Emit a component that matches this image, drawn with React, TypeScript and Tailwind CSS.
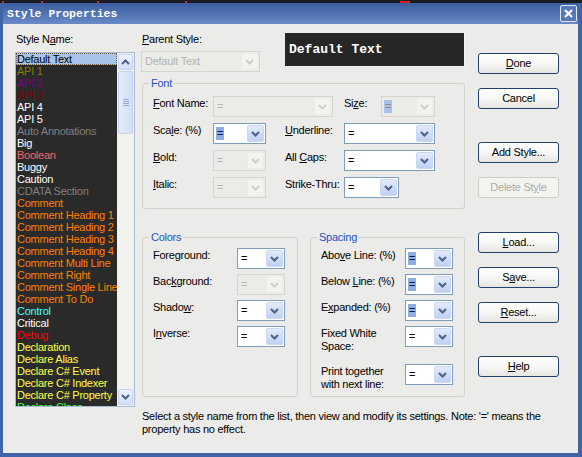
import React from 'react';

const listItems: { name: string; cls: string }[] = [
  { name: 'Default Text', cls: 'text-black' },
  { name: 'API 1', cls: 'text-[#808000]' },
  { name: 'API 2', cls: 'text-[#800080]' },
  { name: 'API 3', cls: 'text-[#800000]' },
  { name: 'API 4', cls: 'text-white' },
  { name: 'API 5', cls: 'text-white' },
  { name: 'Auto Annotations', cls: 'text-[#808080]' },
  { name: 'Big', cls: 'text-white' },
  { name: 'Boolean', cls: 'text-[#ff6464]' },
  { name: 'Buggy', cls: 'text-white' },
  { name: 'Caution', cls: 'text-white' },
  { name: 'CDATA Section', cls: 'text-[#808080]' },
  { name: 'Comment', cls: 'text-[#ff8000]' },
  { name: 'Comment Heading 1', cls: 'text-[#ff8000]' },
  { name: 'Comment Heading 2', cls: 'text-[#ff8000]' },
  { name: 'Comment Heading 3', cls: 'text-[#ff8000]' },
  { name: 'Comment Heading 4', cls: 'text-[#ff8000]' },
  { name: 'Comment Multi Line', cls: 'text-[#ff8000]' },
  { name: 'Comment Right', cls: 'text-[#ff8000]' },
  { name: 'Comment Single Line', cls: 'text-[#ff8000]' },
  { name: 'Comment To Do', cls: 'text-[#ff8000]' },
  { name: 'Control', cls: 'text-[#40ffff]' },
  { name: 'Critical', cls: 'text-white' },
  { name: 'Debug', cls: 'text-[#ff0000]' },
  { name: 'Declaration', cls: 'text-[#ffff40]' },
  { name: 'Declare Alias', cls: 'text-[#ffff40]' },
  { name: 'Declare C# Event', cls: 'text-[#ffff40]' },
  { name: 'Declare C# Indexer', cls: 'text-[#ffff40]' },
  { name: 'Declare C# Property', cls: 'text-[#ffff40]' },
  { name: 'Declare Class', cls: 'text-[#40ff40]' },
];

function Chevron({ disabled, up }: { disabled?: boolean; up?: boolean }) {
  return (
    <svg width="9" height="6" viewBox="0 0 9 6">
      <path
        d={up ? 'M1 5 L4.5 1.5 L8 5' : 'M1 1 L4.5 4.5 L8 1'}
        fill="none"
        stroke={disabled ? '#cfcfca' : '#4d6185'}
        strokeWidth="2"
      />
    </svg>
  );
}

function Combo({
  w,
  text = '=',
  disabled,
  hl,
  className = '',
}: {
  w: string;
  text?: string;
  disabled?: boolean;
  hl?: boolean;
  className?: string;
}) {
  return (
    <div
      className={`${w} ${className} h-[21px] shrink-0 flex border ${
        disabled ? 'border-[#d6d5cf] bg-[#ebebe8]' : 'border-[#7f9db9] bg-white'
      }`}
    >
      <div className="flex-1 flex items-center pl-[2px] overflow-hidden whitespace-nowrap">
        <span
          className={`px-[1px] leading-[13px] ${
            hl
              ? disabled
                ? 'bg-[#a9c0e8] text-[#8a8a86]'
                : 'bg-[#8eaee2] text-[#10204a]'
              : disabled
              ? 'text-[#b4b3ad]'
              : 'text-black'
          }`}
        >
          {text}
        </span>
      </div>
      <div
        className={`w-[17px] m-[1px] rounded-[2px] flex items-center justify-center border ${
          disabled
            ? 'bg-[#f3f3f0] border-[#ecece8]'
            : 'bg-linear-to-b from-[#e3ebfb] to-[#bfd0f1] border-[#cad8f3]'
        }`}
      >
        <Chevron disabled={disabled} />
      </div>
    </div>
  );
}

function Btn({
  children,
  mt,
  disabled,
}: {
  children: React.ReactNode;
  mt: string;
  disabled?: boolean;
}) {
  return (
    <div
      className={`${mt} w-[81px] h-[21px] flex items-center justify-center rounded-[3px] border ${
        disabled
          ? 'border-[#cfcec6] text-[#acaba4] bg-[#f3f3f0]'
          : 'border-[#22406f] text-black bg-linear-to-b from-white via-[#f7f7f5] to-[#e6e5e0]'
      }`}
    >
      {children}
    </div>
  );
}

function Group({
  title,
  className,
  children,
}: {
  title: string;
  className: string;
  children: React.ReactNode;
}) {
  return (
    <fieldset className={`border border-[#d3d2c8] rounded-[3px] ${className}`}>
      <legend className="ml-[6px] px-[2px] leading-[13px] text-[#2453c4]">{title}</legend>
      {children}
    </fieldset>
  );
}

export default function App() {
  return (
    <div className="w-[582px] h-[457px] flex flex-col bg-[#181b22] overflow-hidden text-[11px] font-['Liberation_Sans',Arial,sans-serif]">
      {/* strip of whatever sits behind the window */}
      <div className="h-[3px] flex items-end">
        <span className="ml-[2px] w-[2px] h-[2px] bg-[#e02020]" />
        <span className="ml-[37px] w-[2px] h-[2px] bg-[#e02020]" />
        <span className="ml-[54px] w-[2px] h-[2px] bg-[#e02020]" />
        <span className="ml-[86px] w-[2px] h-[2px] bg-[#e02020]" />
        <span className="ml-[213px] w-[10px] h-[2px] bg-[#e02020]" />
      </div>

      <div className="flex-1 flex flex-col border-l-[3px] border-r-[4px] border-b-[4px] border-[#4163a8]">
        {/* title bar */}
        <div className="h-[21px] flex items-center justify-between pl-[4px] pr-[1px] bg-linear-to-b from-[#3b5c9f] via-[#5172b2] to-[#6a8bc8]">
          <span className="text-white font-bold text-[11.5px] font-['Liberation_Mono',monospace]">
            Style Properties
          </span>
          <div className="w-[17px] h-[17px] flex items-center justify-center border border-[#dfe7f6] rounded-[2px] bg-[#5678bb]">
            <svg width="9" height="9" viewBox="0 0 9 9">
              <path d="M1 1 L8 8 M8 1 L1 8" stroke="white" strokeWidth="2.2" />
            </svg>
          </div>
        </div>

        {/* body */}
        <div className="flex-1 flex bg-[#ebebea] pt-[9px] pl-[12px] text-black tracking-[-0.25px]">
          {/* style list */}
          <div className="w-[120px] flex flex-col">
            <div className="pl-[1px] leading-[13px]">
              Style N<u>a</u>me:
            </div>
            <div className="mt-[6px] h-[355px] flex border border-[#a9bad3] bg-[#2a2a2a] overflow-hidden">
              <div className="flex-1 flex flex-col overflow-hidden">
                {listItems.map((it, i) => (
                  <div
                    key={it.name}
                    className={`h-[12px] shrink-0 leading-[12px] pl-[1px] whitespace-nowrap ${it.cls} ${
                      i === 0
                        ? 'bg-[#a8c4e8] outline-1 outline-dotted outline-[#6b5a48] -outline-offset-1'
                        : ''
                    }`}
                  >
                    {it.name}
                  </div>
                ))}
              </div>
              <div className="w-[17px] shrink-0 flex flex-col bg-[#f2f2ee] py-[1px]">
                <div className="h-[16px] mx-[1px] flex items-center justify-center rounded-[2px] border border-[#c4d2ee] bg-linear-to-b from-[#eef3fd] to-[#d2def5]">
                  <Chevron up />
                </div>
                <div className="h-[63px] mt-[1px] mx-[1px] flex flex-col items-center justify-center gap-[1px] rounded-[2px] border border-[#c4d2ee] bg-linear-to-r from-[#e6edfb] to-[#d3dff5]">
                  <div className="w-[6px] h-px bg-[#90a7d4]" />
                  <div className="w-[6px] h-px bg-[#90a7d4]" />
                  <div className="w-[6px] h-px bg-[#90a7d4]" />
                  <div className="w-[6px] h-px bg-[#90a7d4]" />
                </div>
                <div className="flex-1" />
                <div className="h-[16px] mx-[1px] flex items-center justify-center rounded-[2px] border border-[#c4d2ee] bg-linear-to-b from-[#eef3fd] to-[#d2def5]">
                  <Chevron />
                </div>
              </div>
            </div>
          </div>

          {/* middle + right */}
          <div className="ml-[6px] flex flex-col">
            <div className="flex items-start">
              {/* middle column */}
              <div className="w-[324px] flex flex-col">
                <div className="flex items-start">
                  <div className="w-[119px] flex flex-col">
                    <div className="pl-[1px] leading-[13px]">
                      <u>P</u>arent Style:
                    </div>
                    <Combo w="w-[119px]" className="mt-[5px]" text="Default Text" disabled />
                  </div>
                  <div className="ml-[25px] w-[180px] h-[34px] flex items-center pl-[4px] bg-[#262626] border-b border-r border-[#f4f4f4]">
                    <span className="text-white font-bold text-[13px] tracking-normal font-['Liberation_Mono',monospace]">
                      Default Text
                    </span>
                  </div>
                </div>

                <Group title="Font" className="mt-[5px] ml-[1px] w-[323px] h-[132px]">
                  <div className="pl-[10px] pt-[6px] flex flex-col gap-[6px]">
                    <div className="flex items-start">
                      <div className="w-[60px] leading-[13px] mt-[1px]">
                        <u>F</u>ont Name:
                      </div>
                      <Combo w="w-[120px]" disabled />
                      <div className="ml-[11px] w-[37px] leading-[13px] mt-[1px]">
                        Si<u>z</u>e:
                      </div>
                      <Combo w="w-[54px]" disabled hl />
                    </div>
                    <div className="flex items-start">
                      <div className="w-[60px] leading-[13px] mt-[1px]">
                        Sca<u>l</u>e: (%)
                      </div>
                      <Combo w="w-[53px]" hl />
                      <div className="ml-[19px] w-[59px] leading-[13px] mt-[1px]">
                        <u>U</u>nderline:
                      </div>
                      <Combo w="w-[91px]" />
                    </div>
                    <div className="flex items-start">
                      <div className="w-[60px] leading-[13px] mt-[1px]">
                        <u>B</u>old:
                      </div>
                      <Combo w="w-[53px]" disabled />
                      <div className="ml-[19px] w-[59px] leading-[13px] mt-[1px]">
                        All <u>C</u>aps:
                      </div>
                      <Combo w="w-[91px]" />
                    </div>
                    <div className="flex items-start">
                      <div className="w-[60px] leading-[13px] mt-[1px]">
                        <u>I</u>talic:
                      </div>
                      <Combo w="w-[53px]" disabled />
                      <div className="ml-[19px] w-[59px] leading-[13px] mt-[1px]">
                        Strike-Thru:
                      </div>
                      <Combo w="w-[55px]" />
                    </div>
                  </div>
                </Group>

                <div className="mt-[22px] ml-[1px] flex">
                  <Group title="Colors" className="w-[156px] h-[166px]">
                    <div className="pl-[10px] pt-[4px] flex flex-col gap-[5px]">
                      <div className="flex items-start">
                        <div className="w-[84px] leading-[13px] mt-[1px]">
                          Fore<u>g</u>round:
                        </div>
                        <Combo w="w-[48px]" />
                      </div>
                      <div className="flex items-start">
                        <div className="w-[84px] leading-[13px] mt-[1px]">
                          Bac<u>k</u>ground:
                        </div>
                        <Combo w="w-[48px]" disabled />
                      </div>
                      <div className="flex items-start">
                        <div className="w-[84px] leading-[13px] mt-[1px]">
                          Shado<u>w</u>:
                        </div>
                        <Combo w="w-[48px]" />
                      </div>
                      <div className="flex items-start">
                        <div className="w-[84px] leading-[13px] mt-[1px]">
                          I<u>n</u>verse:
                        </div>
                        <Combo w="w-[48px]" />
                      </div>
                    </div>
                  </Group>
                  <Group title="Spacing" className="ml-[12px] w-[155px] h-[166px]">
                    <div className="pl-[10px] pt-[4px] flex flex-col gap-[5px]">
                      <div className="flex items-start">
                        <div className="w-[84px] leading-[13px] mt-[1px]">
                          Abo<u>v</u>e Line: (%)
                        </div>
                        <Combo w="w-[48px]" hl />
                      </div>
                      <div className="flex items-start">
                        <div className="w-[84px] leading-[13px] mt-[1px]">
                          Below <u>L</u>ine: (%)
                        </div>
                        <Combo w="w-[48px]" hl />
                      </div>
                      <div className="flex items-start">
                        <div className="w-[84px] leading-[13px] mt-[1px]">
                          E<u>x</u>panded: (%)
                        </div>
                        <Combo w="w-[48px]" hl />
                      </div>
                      <div className="flex items-start">
                        <div className="w-[84px] leading-[13px] mt-[1px]">
                          Fixed White
                          <br />
                          Space:
                        </div>
                        <Combo w="w-[48px]" />
                      </div>
                      <div className="mt-[6px] flex items-start">
                        <div className="w-[84px] leading-[13px] mt-[1px]">
                          Print together
                          <br />
                          with next line:
                        </div>
                        <Combo w="w-[48px]" />
                      </div>
                    </div>
                  </Group>
                </div>
              </div>

              {/* buttons */}
              <div className="ml-[13px] flex flex-col">
                <Btn mt="mt-[20px]">
                  <u>D</u>one
                </Btn>
                <Btn mt="mt-[14px]">Cancel</Btn>
                <Btn mt="mt-[33px]">Add Style...</Btn>
                <Btn mt="mt-[14px]" disabled>
                  Delete St<u>y</u>le
                </Btn>
                <Btn mt="mt-[34px]">
                  <u>L</u>oad...
                </Btn>
                <Btn mt="mt-[14px]">
                  S<u>a</u>ve...
                </Btn>
                <Btn mt="mt-[14px]">
                  <u>R</u>eset...
                </Btn>
                <Btn mt="mt-[33px]">
                  <u>H</u>elp
                </Btn>
              </div>
            </div>

            <div className="mt-[13px] ml-[1px] leading-[13px] whitespace-nowrap">
              Select a style name from the list, then view and modify its settings. Note: '=' means the
              <br />
              property has no effect.
            </div>
          </div>
        </div>
      </div>
    </div>
  );
}
